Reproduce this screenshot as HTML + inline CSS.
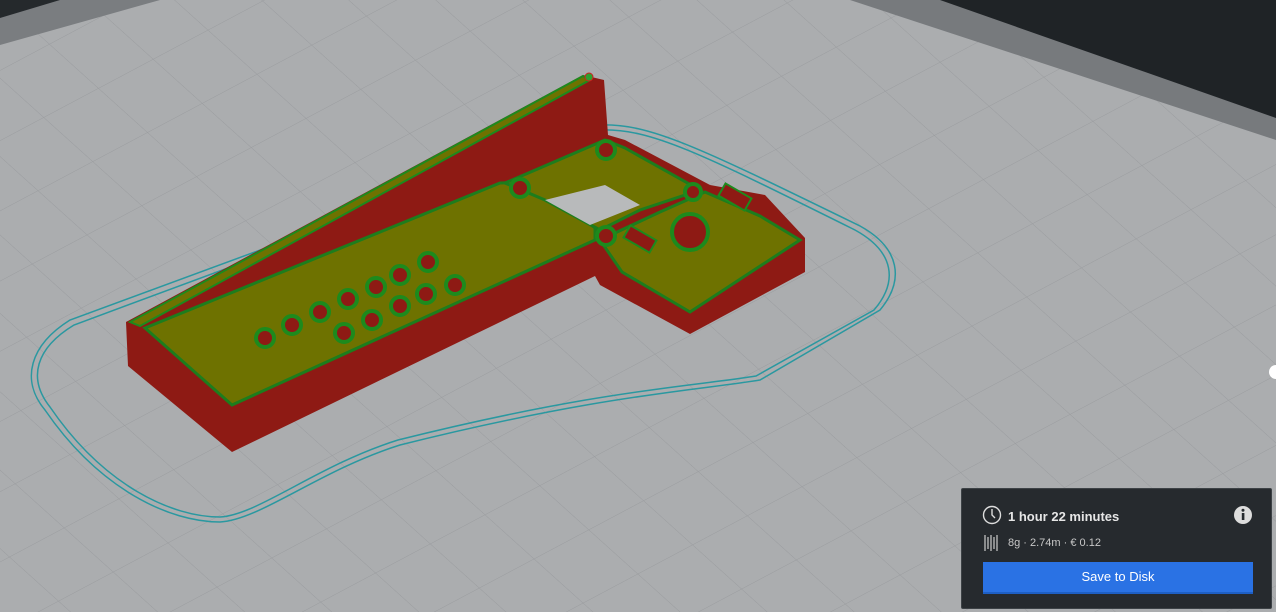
<!DOCTYPE html>
<html><head><style>
body{margin:0;width:1276px;height:612px;overflow:hidden;background:#abadaf;font-family:"Liberation Sans",sans-serif;position:relative}
svg{position:absolute;left:0;top:0}
.panel{position:absolute;left:961px;top:488px;width:309px;height:119px;background:#262a2e;border:1px solid #3d4246;border-radius:2px;color:#e6e6e6}
.t1{position:absolute;left:46px;top:20px;font-size:13px;font-weight:bold}
.t2{position:absolute;left:46px;top:48px;font-size:11px;color:#c8c8c8}
.btn{position:absolute;left:21px;top:73px;width:270px;height:30px;background:#2a72e4;border-bottom:2px solid #1e5fc4;color:#fff;font-size:13px;text-align:center;line-height:30px}
</style></head><body>
<svg width="1276" height="612" viewBox="0 0 1276 612">
<defs>
<pattern id="g" width="62" height="62" patternUnits="userSpaceOnUse" patternTransform="rotate(-28) skewX(20)">
<path d="M0 0H62M0 0V62" stroke="#9a9c9f" stroke-width="1" fill="none"/>
</pattern>
</defs>
<rect width="1276" height="612" fill="#abadaf"/>
<rect width="1276" height="612" fill="url(#g)"/>
<polygon points="850,0 1276,0 1276,140" fill="#777a7d"/>
<polygon points="940,0 1276,0 1276,118" fill="#1f2326"/>
<polygon points="0,0 160,0 0,45" fill="#7a7d80"/>
<polygon points="0,0 60,0 0,18" fill="#25292c"/>
<g fill="none" stroke="#2a98a0" stroke-width="1.5">
<path d="M600,125 C650,123 700,148 860,226 C900,248 905,280 880,310 L760,380 C700,390 600,395 400,445 C320,470 260,520 220,522 C170,522 100,490 45,410 C20,380 30,345 70,320 Z"/>
<path d="M600,130 C650,128 700,153 855,230 C895,252 898,282 874,310 L756,376 C696,386 598,390 398,440 C318,465 258,515 220,517 C172,517 104,486 50,407 C27,378 36,348 74,325 Z"/>
</g>
<polygon points="126,322 583,75 604,80 608,135 625,140 710,185 765,195 805,238 805,272 690,334 600,285 595,276 232,452 128,366" fill="#8e1a14"/>
<polygon points="130,322 583,76 590,80 140,326" fill="#6e7200" stroke="#1d8a1d" stroke-width="2"/>
<polygon points="145,328 500,183 540,182 595,228 595,240 232,405" fill="#6e7200" stroke="#1d7d1d" stroke-width="3"/>
<polygon points="600,240 660,212 705,192 760,216 800,240 690,312 622,272" fill="#6e7200" stroke="#1d7d1d" stroke-width="3"/>
<polygon points="505,183 605,140 625,148 700,190 640,210 600,230 545,200" fill="#6e7200" stroke="#1d7d1d" stroke-width="3"/>
<polygon points="545,200 605,185 640,205 590,225" fill="#b8babb"/>
<g fill="#8e1a14" stroke="#1d8a1d" stroke-width="4">
<circle cx="265" cy="338" r="9"/><circle cx="292" cy="325" r="9"/><circle cx="320" cy="312" r="9"/><circle cx="348" cy="299" r="9"/><circle cx="376" cy="287" r="9"/><circle cx="400" cy="275" r="9"/><circle cx="428" cy="262" r="9"/><circle cx="455" cy="285" r="9"/>
<circle cx="344" cy="333" r="9"/><circle cx="372" cy="320" r="9"/><circle cx="400" cy="306" r="9"/><circle cx="426" cy="294" r="9"/>
<circle cx="690" cy="232" r="18"/><circle cx="520" cy="188" r="9"/><circle cx="606" cy="150" r="9"/><circle cx="606" cy="236" r="9"/><circle cx="693" cy="192" r="8"/>
</g>
<rect x="720" y="190" width="30" height="14" fill="#8e1a14" stroke="#1d8a1d" stroke-width="2" transform="rotate(30 735 197)"/>
<rect x="625" y="232" width="30" height="14" fill="#8e1a14" stroke="#1d8a1d" stroke-width="2" transform="rotate(30 640 239)"/>
<circle cx="589" cy="77" r="4" fill="#2fa02f" stroke="#d02020"/>
<circle cx="1276" cy="372" r="7" fill="#fff"/>
</svg>
<div class="panel">
<svg width="20" height="20" style="left:20px;top:16px" viewBox="0 0 20 20"><circle cx="10" cy="10" r="8.5" fill="none" stroke="#ddd" stroke-width="1.4"/><path d="M10 4V10L13 13" stroke="#ddd" stroke-width="1.4" fill="none"/></svg>
<div class="t1">1 hour 22 minutes</div>
<svg width="20" height="20" style="left:271px;top:16px" viewBox="0 0 20 20"><circle cx="10" cy="10" r="9" fill="#ddd"/><rect x="8.8" y="8" width="2.6" height="7" fill="#262a2e"/><circle cx="10" cy="5.3" r="1.5" fill="#262a2e"/></svg>
<svg width="16" height="18" style="left:22px;top:45px" viewBox="0 0 16 18"><path d="M1 1V17M4 3V15M7 1V17M10 3V15M13 1V17" stroke="#ccc" stroke-width="1.2"/></svg>
<div class="t2">8g · 2.74m · € 0.12</div>
<div class="btn">Save to Disk</div>
</div>
</body></html>
